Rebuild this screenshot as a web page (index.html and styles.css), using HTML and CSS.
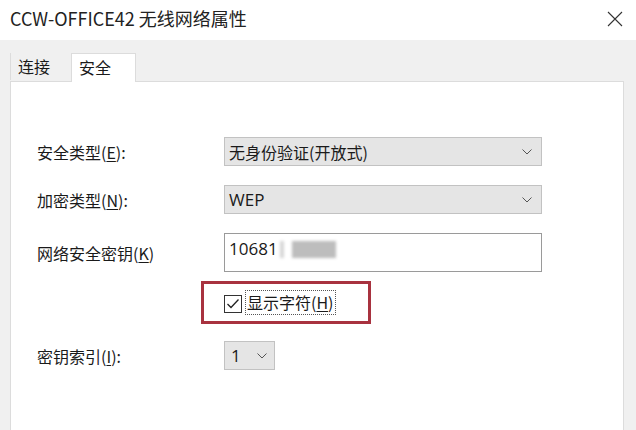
FILE: index.html
```html
<!DOCTYPE html>
<html lang="zh-CN">
<head>
    <meta charset="UTF-8">
    <title>CCW-OFFICE42 无线网络属性</title>
    <link rel="stylesheet" href="styles.css">
</head>
<body>

    <div class="titlebar">
        <span class="title">CCW-OFFICE42 无线网络属性</span>
        <svg class="close" width="16" height="16" viewBox="0 0 16 16">
            <path d="M1 1 L15 15 M15 1 L1 15" stroke="#333" stroke-width="1.1" fill="none"/>
        </svg>
    </div>

    <div class="dialog">
        <div class="tabs">
            <div class="tab">连接</div>
            <div class="tab active">安全</div>
        </div>

        <div class="panel">
            <div class="form">
                <label>安全类型(<u>E</u>):</label>
                <div class="select wide">
                    <span>无身份验证(开放式)</span>
                    <svg class="chev" width="10" height="6" viewBox="0 0 10 6"><path d="M0.5 0.5 L5 5 L9.5 0.5" stroke="#555" fill="none"/></svg>
                </div>

                <label>加密类型(<u>N</u>):</label>
                <div class="select wide">
                    <span class="latin">WEP</span>
                    <svg class="chev" width="10" height="6" viewBox="0 0 10 6"><path d="M0.5 0.5 L5 5 L9.5 0.5" stroke="#555" fill="none"/></svg>
                </div>

                <label>网络安全密钥(<u>K</u>)</label>
                <div class="keybox">
                    <span class="latin">10681</span><span class="blur thin"></span><span class="blur"></span>
                </div>

                <div class="empty"></div>
                <div class="highlight">
                    <span class="check">
                        <svg width="14" height="12" viewBox="0 0 14 12"><path d="M1.5 6 L5 9.5 L12.5 1.5" stroke="#222" stroke-width="1.3" fill="none"/></svg>
                    </span>
                    <span class="checklabel">显示字符(<u>H</u>)</span>
                </div>

                <label>密钥索引(<u>I</u>):</label>
                <div class="select small">
                    <span class="latin">1</span>
                    <svg class="chev" width="10" height="6" viewBox="0 0 10 6"><path d="M0.5 0.5 L5 5 L9.5 0.5" stroke="#555" fill="none"/></svg>
                </div>
            </div>
        </div>
    </div>

</body>
</html>
```

FILE: styles.css
```css
body {
    margin: 0;
    width: 636px;
    height: 430px;
    overflow: hidden;
    font-family: "Noto Sans CJK SC", "Noto Sans", sans-serif;
    color: #1a1a1a;
    background-color: #f0f0f0;
}
u {
    text-decoration-thickness: 1px;
    text-underline-offset: 2px;
}
.titlebar {
    height: 40px;
    background-color: #fff;
    display: flex;
    align-items: center;
    justify-content: space-between;
    padding: 0 13px 0 10px;
}
.title {
    font-size: 18px;
    color: #222;
    position: relative;
    top: -2px;
}
.close {
    margin-top: -2px;
}
.dialog {
    height: 390px;
    padding: 0 12px 0 10px;
    display: flex;
    flex-direction: column;
}
.tabs {
    height: 41px;
    display: flex;
    align-items: flex-end;
}
.tab {
    height: 27px;
    width: 61px;
    font-size: 16px;
    line-height: 27px;
    padding-left: 7px;
    box-sizing: border-box;
    border-left: 1px solid #dcdcdc;
    background-color: #f0f0f0;
    margin-bottom: 1px;
}
.tab.active {
    height: 29px;
    width: 65px;
    padding-left: 7px;
    background-color: #fff;
    border: 1px solid #dcdcdc;
    border-bottom: none;
    margin-bottom: -1px;
    position: relative;
    z-index: 1;
}
.panel {
    flex: 1;
    background-color: #fff;
    border: 1px solid #dcdcdc;
    border-bottom: none;
    padding: 55px 0 0 26px;
}
.form {
    display: grid;
    grid-template-columns: 187px 318px;
    row-gap: 19px;
    align-items: center;
}
.form label {
    font-size: 16px;
}
.latin {
    font-family: "Open Sans", "Noto Sans", sans-serif;
}
.select {
    height: 29px;
    box-sizing: border-box;
    background-color: #e5e5e5;
    border: 1px solid #c2c2c2;
    display: flex;
    align-items: center;
    justify-content: space-between;
    padding: 0 9px 0 4px;
    font-size: 16px;
}
.select .latin {
    font-size: 17px;
}
.select.small {
    width: 51px;
    padding-right: 7px;
    padding-left: 6px;
}
.keybox {
    height: 39px;
    box-sizing: border-box;
    border: 1px solid #9a9a9a;
    padding: 3px 4px 0;
    font-size: 17px;
    display: flex;
    align-items: flex-start;
    line-height: 24px;
}
.blur {
    display: inline-block;
    width: 44px;
    height: 17px;
    margin-top: 4px;
    background-color: #bdbdbd;
    filter: blur(1.5px);
}
.blur.thin {
    width: 4px;
    margin-left: 2px;
    margin-right: 8px;
    background-color: #d6d6d6;
}
.highlight {
    margin: -10px 0 -2px -23px;
    width: 170px;
    height: 43px;
    box-sizing: border-box;
    border: 3px solid #a8323f;
    display: flex;
    align-items: center;
    padding-left: 20px;
}
.check {
    width: 18px;
    height: 18px;
    box-sizing: border-box;
    border: 1px solid #333;
    display: flex;
    align-items: center;
    justify-content: center;
    margin-top: 3px;
}
.checklabel {
    font-size: 16px;
    margin-left: 3px;
    padding: 0 1px;
    line-height: 23px;
    border: 1px dotted #555;
}
```
